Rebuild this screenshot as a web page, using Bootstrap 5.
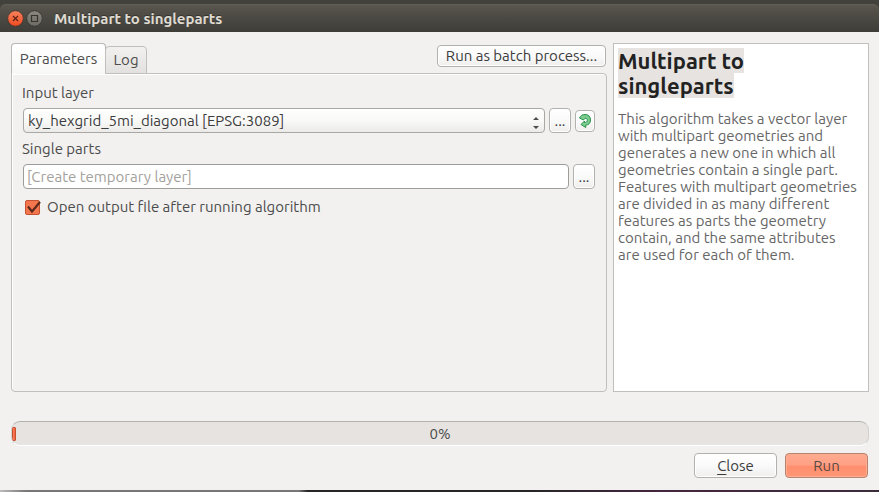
<!DOCTYPE html>
<html lang="en">
<head>
<meta charset="utf-8">
<meta name="viewport" content="width=device-width, initial-scale=1">
<title>Multipart to singleparts</title>
<link rel="stylesheet" href="https://cdn.jsdelivr.net/npm/bootstrap@5.3.0/dist/css/bootstrap.min.css">
<style>
  body { font-family: Ubuntu, "Noto Sans", sans-serif; font-size: 15px; line-height: 20px; color: #4c4c4c; background: #f2f1f0; }
  .titlebar-face { height: 28px; padding: 1px 7px 0; gap: 2px; border-radius: 6px 6px 0 0; background: linear-gradient(#5a584f, #504e47 30%, #3e3d38); box-shadow: inset 0 1px #5f5d54; }
  .titlebar-wrap { padding-top: 4px; background: #42413c; }
  .titlebar-face h1 { font-size: 15px; line-height: 20px; font-weight: 700; color: #dfdbd2; margin-left: 9px; text-shadow: 0 -1px #33322e; }
  .winbtn { width: 17px; height: 17px; padding: 0; border: 0; background: none; }
  .winbtn svg { display: block; }
  .content-area { padding: 11px 10px 12px 11px; }
  .tool-row { gap: 6px; }
  .help-col { flex: 0 0 256px; }
  .tab-strip { height: 31px; margin-bottom: -1px; position: relative; }
  .tab-strip .nav-link { color: #4c4c4c; padding: 0 7px; border: 1px solid #c0bfbc; border-radius: 4px 4px 0 0; margin: 0; }
  .tab-strip .nav-link.active { height: 31px; min-width: 95px; color: #4c4c4c; background: linear-gradient(#fff, #f8f8f7); border-color: #b8b7b3; border-bottom-color: #f8f8f7; }
  .tab-strip .nav-link.rest { height: 28px; min-width: 42px; margin-left: -1px; background: linear-gradient(#f2f1f0, #e3e1df); }
  .plain-btn { color: #3c3c3c; font-size: 15px; line-height: 18px; padding: 0; border: 1px solid #b3b1ad; border-radius: 4px; background: linear-gradient(#fff, #fafafa 50%, #efeeed); box-shadow: inset 0 0 0 1px #fff; white-space: nowrap; }
  .plain-btn:hover { color: #3c3c3c; border-color: #a3a19d; background: #fff; }
  .batch { width: 169px; height: 22px; margin-top: 2px; margin-right: 1px; }
  .pane { border: 1px solid #c0bfbc; border-radius: 0 4px 4px 4px; box-shadow: inset 1px 1px #fff; padding: 9px 11px; }
  .field-label { line-height: 20px; margin: 0 0 5px -1px; display: block; }
  .layer-wrap { position: relative; }
  .layer-select, .path-input { height: 25px; min-height: 25px; font-size: 15px; line-height: 20px; color: #3c3c3c; border: 1px solid #aaa8a4; border-radius: 4px; }
  .layer-select { padding: 1px 24px 0 4px; background: linear-gradient(#fff, #f9f9f8 50%, #ebeae9); }
  .path-input { padding: 0 3px; background: #fff; border-color: #9f9d99; }
  .path-input::placeholder { color: #a3a19c; opacity: 1; }
  .spin { position: absolute; right: 5px; top: 8px; pointer-events: none; }
  .dots-btn { flex: 0 0 22px; height: 25px; }
  .iter-btn { flex: 0 0 20px; height: 22px; }
  .layer-row { margin-bottom: 6px; }
  .tick { width: 15px; height: 15px; margin: 0; border: 1px solid #c4512f; border-radius: 2px; background-color: #f4764f; }
  .form-check-input.tick[type=checkbox] { border-radius: 2px; }
  .tick:checked { background-color: #f4764f; border-color: #c4512f; background-image: none; }
  .tick-wrap { position: relative; width: 17px; height: 17px; padding: 1px; }
  .tick-wrap .form-check-input { display: block; float: none; }
  .tick-wrap svg { position: absolute; left: 1px; top: 1px; pointer-events: none; }
  .tick-row { gap: 6px; padding-left: 1px; }
  .help-box { background: #fff; border: 1px solid #c0bfbc; padding: 4px; }
  .help-box h2 { font-size: 22px; line-height: 25px; font-weight: 700; color: #222; margin: 0 0 12px; }
  .help-box h2 span { background: #e6e3e0; }
  .help-box p { line-height: 17px; color: #666; margin: 0; padding-right: 6px; }
  .run-progress { height: 25px; position: relative; margin: 29px 0 7px; border-radius: 9px; background: #e6e3e0; border: 1px solid #d3d0cd; border-top-color: #b5b3af; border-bottom-color: #fff; font-size: 15px; color: #4c4c4c; padding: 5px 0; }
  .run-progress .progress-bar { border: 1px solid #c9502f; border-radius: 1px; background: linear-gradient(90deg, #f7825f, #f0603a); min-width: 4px; height: 14px; }
  .run-progress .pct { position: absolute; inset: 0; text-align: center; line-height: 24px; }
  .foot-row { padding-right: 1px; }
  .foot-btn { width: 83px; height: 25px; line-height: 22px; }
  .foot-btn u { text-underline-offset: 3px; }
  .run-btn { color: #5a4a44; border-color: #b9826b; background: linear-gradient(#ffab90, #ffa085 48%, #ff8f6e 54%, #ff9676); box-shadow: inset 0 0 0 1px #ffae94; }
  .run-btn:hover { background: #ff9d80; border-color: #b9826b; }
  .edge { height: 2px; background: linear-gradient(90deg, #bbb, #777 3%, #777 34%, #262626 35%, #262626 60%, #43263f 75%, #3c2c3a); }
</style>
</head>
<body class="d-flex flex-column min-vh-100">
<header class="titlebar-wrap">
  <div class="titlebar-face d-flex align-items-center">
    <button class="winbtn" type="button" aria-label="Close window">
      <svg width="17" height="17" viewBox="0 0 17 17"><defs><linearGradient id="gc" x2="0" y2="1"><stop stop-color="#f9845f"/><stop offset="1" stop-color="#ee4a1f"/></linearGradient></defs><circle cx="8.500" cy="8.500" r="7.800" fill="url(#gc)" stroke="#45332c" stroke-width=".8"/><path d="M6 6l5 5M11 6l-5 5" stroke="#5a2313" stroke-width="1.200"/></svg>
    </button>
    <button class="winbtn" type="button" aria-label="Maximize window">
      <svg width="17" height="17" viewBox="0 0 17 17"><defs><linearGradient id="gm" x2="0" y2="1"><stop stop-color="#8b8880"/><stop offset="1" stop-color="#6c6a63"/></linearGradient></defs><circle cx="8.500" cy="8.500" r="7.800" fill="url(#gm)" stroke="#35332e" stroke-width=".8"/><path d="M5.500 5.500h6v6h-6z" fill="none" stroke="#35332e" stroke-width="1.200"/></svg>
    </button>
    <h1 class="mb-0">Multipart to singleparts</h1>
  </div>
</header>

<main class="content-area flex-grow-1 d-flex flex-column">
  <div class="tool-row d-flex flex-grow-1">
    <section class="flex-grow-1 d-flex flex-column">
      <div class="d-flex justify-content-between align-items-start">
        <div class="tab-strip nav d-flex align-items-end" role="tablist">
          <button class="nav-link active" type="button" role="tab" aria-selected="true">Parameters</button>
          <button class="nav-link rest" type="button" role="tab" aria-selected="false">Log</button>
        </div>
        <button class="btn plain-btn batch" type="button">Run as batch process...</button>
      </div>
      <div class="pane flex-grow-1">
        <label class="field-label" for="layer">Input layer</label>
        <div class="layer-row d-flex align-items-center gap-1">
          <div class="layer-wrap flex-grow-1">
            <select class="form-select layer-select" id="layer"><option>ky_hexgrid_5mi_diagonal [EPSG:3089]</option></select>
            <svg class="spin" width="8" height="14" viewBox="0 0 8 14" fill="#4c4c4c"><path d="M1 4l3-3 3 3zM1 10l3 3 3-3z"/></svg>
          </div>
          <button class="btn plain-btn dots-btn" type="button" aria-label="Choose input">...</button>
          <button class="btn plain-btn iter-btn d-flex align-items-center justify-content-center" type="button" aria-label="Iterate over this layer">
            <svg width="14" height="16" viewBox="0 0 14 16"><path d="M1.500 5C2.500 2.500 4.500 1.500 7 1.500c3.500 0 5.500 2.200 5.500 5.500 0 3.300-2 5-5 5.300L7.800 14.500 3 11.500 6.500 8v1.500c1.800 0 2.800-.8 2.800-2.200C9.300 5.800 8.300 5 7 5.300L5.500 7z" fill="#7ccb90" stroke="#259447" stroke-linejoin="round"/></svg>
          </button>
        </div>
        <label class="field-label" for="output">Single parts</label>
        <div class="d-flex gap-1 mb-2">
          <input class="form-control path-input" id="output" type="text" placeholder="[Create temporary layer]">
          <button class="btn plain-btn dots-btn" type="button" aria-label="Choose output">...</button>
        </div>
        <div class="tick-row d-flex align-items-center">
          <div class="tick-wrap">
            <input class="form-check-input tick" id="open-output" type="checkbox" checked>
            <svg width="17" height="15" viewBox="0 0 17 15"><path d="M3 6.500L7 11.500 15 2" fill="none" stroke="#5b281a" stroke-width="2.200"/></svg>
          </div>
          <label for="open-output">Open output file after running algorithm</label>
        </div>
      </div>
    </section>
    <aside class="help-col d-flex flex-column">
      <div class="help-box flex-grow-1">
        <h2><span>Multipart to singleparts</span></h2>
        <p>This algorithm takes a vector layer with multipart geometries and generates a new one in which all geometries contain a single part. Features with multipart geometries are divided in as many different features as parts the geometry contain, and the same attributes are used for each of them.</p>
      </div>
    </aside>
  </div>
  <div class="progress run-progress" role="progressbar" aria-label="Algorithm progress" aria-valuenow="0" aria-valuemin="0" aria-valuemax="100">
    <div class="progress-bar" style="width: 0%"></div>
    <span class="pct">0%</span>
  </div>
  <div class="foot-row d-flex justify-content-end gap-2">
    <button class="btn plain-btn foot-btn" type="button"><u>C</u>lose</button>
    <button class="btn plain-btn foot-btn run-btn" type="button">Run</button>
  </div>
</main>
<div class="edge"></div>
<script src="https://cdn.jsdelivr.net/npm/bootstrap@5.3.0/dist/js/bootstrap.bundle.min.js"></script>
</body>
</html>
